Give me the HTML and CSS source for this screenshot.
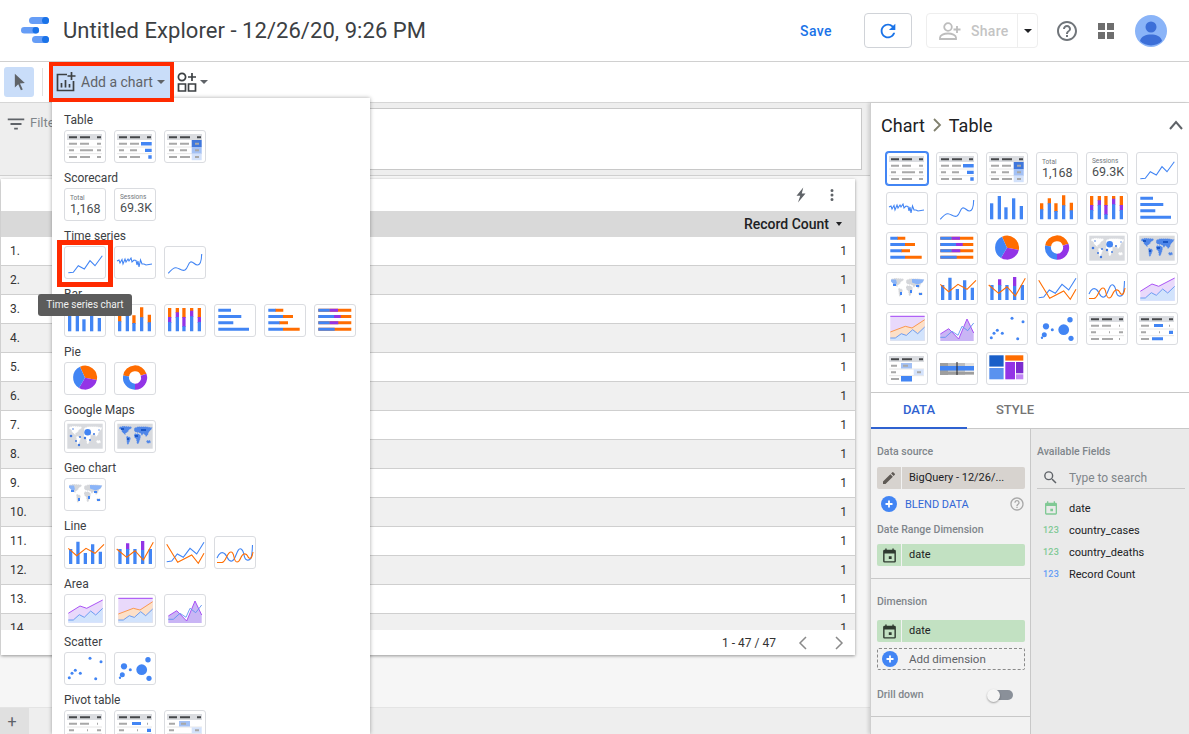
FILE: index.html
```html
<!DOCTYPE html>
<html lang="en">
<head>
  <meta charset="UTF-8">
  <title>Untitled Explorer</title>
  <link rel="stylesheet" href="styles.css">
</head>
<body>
  <!-- shared drawings for icons and chart thumbnails -->
  <svg class="sprites" aria-hidden="true">
    <defs>
      <path id="i-help" d="M11 18h2v-2h-2v2zm1-16C6.48 2 2 6.48 2 12s4.48 10 10 10 10-4.48 10-10S17.52 2 12 2zm0 18c-4.41 0-8-3.59-8-8s3.59-8 8-8 8 3.59 8 8-3.59 8-8 8zm0-14c-2.21 0-4 1.79-4 4h2c0-1.1.9-2 2-2s2 .9 2 2c0 2-3 1.75-3 5h2c0-2.25 3-2.5 3-5 0-2.21-1.79-4-4-4z"/>
      <path id="i-cal" d="M19 4h-1V2h-2v2H8V2H6v2H5a2 2 0 0 0-2 2v14a2 2 0 0 0 2 2h14a2 2 0 0 0 2-2V6a2 2 0 0 0-2-2zm0 16H5V9h14v11zM11 13h4v4h-4z"/>

      <g id="tb-head">
        <rect class="f-band" x="3" y="4" width="35" height="6"/>
        <path class="s-dark" d="M5 7.3h8M16 7.3h10M33 7.3h4"/>
        <path class="s-sep" d="M3 17h35M3 23.7h35"/>
      </g>
      <g id="t-table">
        <use href="#tb-head"/>
        <path class="s-gray" d="M5 13.7h8M16 13.7h9M33 13.7h4M5 20.3h5M16 20.3h13M33 20.3h4M5 27h8M16 27h10M33 27h4"/>
      </g>
      <g id="t-table-bars">
        <use href="#tb-head"/>
        <path class="s-gray" d="M5 13.7h8M16 13.7h9M5 20.3h5M16 20.3h7M5 27h8M16 27h10"/>
        <path class="f-blue" d="M27 12h10.7v3.4H27zM31 18.7h6.7v3.4H31zM34.3 25.3h3.4v3.4h-3.4z"/>
      </g>
      <g id="t-table-heat">
        <use href="#tb-head"/>
        <rect x="27.7" y="10" width="10" height="7" fill="#3f77dc"/>
        <rect x="27.7" y="17" width="10" height="6.7" fill="#a3c1f5"/>
        <rect x="27.7" y="23.7" width="10" height="6.5" fill="#d3e2fb"/>
        <path class="s-gray" d="M5 13.7h8M16 13.7h9M31 13.7h4M5 20.3h5M16 20.3h7M31 20.3h4M5 27h8M16 27h10M31 27h4"/>
      </g>
      <g id="t-score-total">
        <text class="sc-label" x="6" y="12">Total</text>
        <text class="sc-value" x="6" y="25.3">1,168</text>
      </g>
      <g id="t-score-sessions">
        <text class="sc-label" x="6" y="10.7">Sessions</text>
        <text class="sc-value" x="6" y="24">69.3K</text>
      </g>
      <polyline id="t-ts" class="s-blue" points="4.3,26.7 9.3,26.3 14.3,19.7 20.3,23 26,14.7 31,19.7 38.3,9.7"/>
      <polyline id="t-ts-noisy" class="s-blue" points="3,15 5,14 6,17 8,13.5 9,18 11,13 12,16 14,13 15,15 17,12 18,16 20,14 22,14.5 23,19 24,15 25,21 26.5,14 28,18 30,18 32,19 35,18.5 38,18"/>
      <path id="t-ts-smooth" class="s-blue" d="M4.3 27.3C7 24 9 21.5 12 21.7s6 4 9 2.3 3-7 5.5-8 4 3 7 3 4-4 4.2-11"/>
      <g id="t-bar" class="f-blue">
        <rect x="4" y="11.3" width="3.3" height="16"/>
        <rect x="11.7" y="4" width="3.3" height="23.3"/>
        <rect x="18.3" y="15.3" width="3.3" height="12"/>
        <rect x="26" y="6.3" width="3.3" height="21"/>
        <rect x="33.7" y="14" width="3.3" height="13.3"/>
      </g>
      <g id="t-bar-stack">
        <path class="f-orange" d="M4 11.3h3.3v7H4zM11.7 6.3H15v6h-3.3zM18.3 11.3h3.3V20h-3.3zM26 3.3h3.3v11H26zM33.7 10.7H37v8.6h-3.3z"/>
        <path class="f-blue" d="M4 17.3h3.3v10H4zM11.7 11.3H15v16h-3.3zM18.3 19h3.3v8.3h-3.3zM26 13.3h3.3v14H26zM33.7 18.3H37v9h-3.3z"/>
      </g>
      <g id="t-bar-full">
        <path class="f-orange" d="M4 4h3.3v10H4zM11.7 4H15v5h-3.3zM18.3 4h3.3v10h-3.3zM26 4h3.3v3h-3.3zM33.7 4H37v10h-3.3z"/>
        <path class="f-purple" d="M4 13h3.3v6H4zM11.7 8.3H15V14h-3.3zM18.3 13h3.3v10h-3.3zM26 6.7h3.3V13H26zM33.7 13H37v6h-3.3z"/>
        <path class="f-blue" d="M4 18h3.3v9.3H4zM11.7 13H15v14.3h-3.3zM18.3 22.3h3.3v5h-3.3zM26 12.3h3.3v15H26zM33.7 18H37v9.3h-3.3z"/>
      </g>
      <path id="t-hbar" class="f-blue" d="M4.3 4.7H17v3H4.3zM4.3 11h23v3h-23zM4.3 17.3h15v3h-15zM4.3 23.7H35v3H4.3z"/>
      <g id="t-hbar-stack">
        <path class="f-orange" d="M11 4.7h8.3v3H11zM19 11h10v3H19zM15 17.3h9v3h-9zM19 23.7h16.7v3H19z"/>
        <path class="f-blue" d="M4.3 4.7h7.3v3H4.3zM4.3 11H19v3H4.3zM4.3 17.3h11.3v3H4.3zM4.3 23.7H19v3H4.3z"/>
      </g>
      <g id="t-hbar-full">
        <path class="f-orange" d="M4.3 4.7h33v3h-33zM4.3 11h33v3h-33zM4.3 17.3h33v3h-33zM4.3 23.7h33v3h-33z"/>
        <path class="f-purple" d="M15.7 4.7H24v3h-8.3zM20 11h6.7v3H20zM15.7 17.3h8.6v3h-8.6z"/>
        <path class="f-blue" d="M4.3 4.7h11.4v3H4.3zM4.3 11H20v3H4.3zM4.3 17.3h11.4v3H4.3zM4.3 23.7h16.4v3H4.3z"/>
      </g>
      <g id="t-pie">
        <path class="f-orange" d="M21 15.7 16 4.8A12 12 0 0 1 32.8 18z"/>
        <path class="f-purple" d="M21 15.7 32.8 18A12 12 0 0 1 15 26z"/>
        <path class="f-blue" d="M21 15.7 15 26A12 12 0 0 1 16 4.8z"/>
      </g>
      <g id="t-donut" fill="none" stroke-width="6">
        <path stroke="#ff6d01" d="M12.1 14A9 9 0 0 1 29.6 12.7"/>
        <path stroke="#9334e6" d="M29.6 12.7A9 9 0 0 1 21 24.7"/>
        <path stroke="#4285f4" d="M21 24.7A9 9 0 0 1 12.1 14"/>
      </g>
      <path id="land" d="M5 7 9 6l8 .5 1 1.5-3 2-1 2-2 1-.5 2-1.5-1-2-2-1-2.5-2-.5zM12 16l3 .5 2 1.5-1.5 4-1.5 3-1-1-.5-4zM20 8l4-1.5h8l6.5 1-1.500 2.500-2 2-1 3-2 2-1.500-2.500-1.500-.5-1 2-2-3-4-.5-2-1.500zM20 13.500h5l2 2.500-1 4-1.500 4H23l-1-5-2-2zM32 20.500l4-.5 1 3-4 .5z"/>
      <g id="t-map-bubble">
        <rect class="f-map" x="3.3" y="3.7" width="35.4" height="25"/>
        <use href="#land" class="land-speckle" fill="#fff"/>
        <circle class="f-blue" cx="23.7" cy="12.3" r="3.3"/>
        <g fill="#3f78e0"><circle cx="7" cy="16" r="1.3"/><circle cx="9" cy="9" r="0.8"/><circle cx="12" cy="21" r="1"/><circle cx="15" cy="25" r="1.2"/><circle cx="16" cy="17" r="1"/><circle cx="21" cy="18" r="1.2"/><circle cx="26" cy="20" r="0.9"/><circle cx="30" cy="14" r="1"/><circle cx="35" cy="10" r="0.7"/></g>
      </g>
      <g id="t-map-filled">
        <rect class="f-map" x="3.3" y="3.7" width="35.4" height="25"/>
        <use href="#land" class="land-speckle" fill="#4f86e8"/>
        <path fill="#1a56c4" d="M7 8h3v2H7zM27 9h5v2h-5zM21 15h3v2h-3zM13 18h2v2h-2z"/>
      </g>
      <g id="t-geo">
        <use href="#land" class="land-speckle-white" fill="#d4d6da"/>
        <path fill="#8ab4f8" d="M5 7.5h5l1 4-3 1-3-3zM26 7l12 .5-1.5 3-5 2-5.500-2z"/>
        <path class="f-blue" d="M7 12h3v2H7zM14 20h2v3h-2zM24 18h2v3h-2zM33 21h3v2h-3zM30 13h3v2h-3z"/>
      </g>
      <polyline id="ln-combo" class="s-orange" points="4.3,12.3 12.7,19.7 22,12.3 31,17.3 40,8.3"/>
      <g id="t-combo">
        <path class="f-blue" d="M5 13h3.3v15H5zM12.3 5.7h3.3V28h-3.3zM19.7 17H23v11h-3.3zM27 8.3h3.3V28H27zM34.7 15.7H38V28h-3.3z"/>
        <use href="#ln-combo"/>
      </g>
      <g id="t-combo-stack">
        <path class="f-purple" d="M12 7.3h3.3V14H12zM27 5h3.3v9H27z"/>
        <path class="f-blue" d="M4.3 13h3.3v15H4.3zM12 13h3.3v15H12zM19.3 13h3.3v15h-3.3zM27 14h3.3v14H27zM34.7 13H38v15h-3.3z"/>
        <polyline class="s-orange" points="2.7,13 12.7,21.3 21,14.7 29.3,24 39.3,6.3"/>
      </g>
      <g id="t-line-two">
        <polyline class="s-blue" points="2.7,25.7 7.7,25 13.3,18 19.3,21.3 26,12.3 32.7,18 40,6.3"/>
        <polyline class="s-orange" points="2.7,8.3 13.7,26.3 27.7,19 34.3,27.3 40,17.3"/>
      </g>
      <g id="t-line-smooth">
        <path class="s-blue" d="M3 22C5 17 8 15 11 18s3 8 7 7 5-14 9-12 2 10 6 11 5-2 5.5-15"/>
        <path class="s-orange" d="M3 26.5h5C12 26 13 16 17 16s2 10 6 10 3-7 7-8 3 3 5 4 3 0 4-6"/>
      </g>
      <g id="t-area">
        <path fill="#e9d9fb" d="M4.3 19.3 16 12l6.7 2.3 16-8.3v22.7H4.3z"/>
        <path fill="#d2e3fc" d="M4.3 26h5l6-5.3 5 2.6 6.400-6.300 5 4 7-6.700v14.400H4.300z"/>
        <polyline fill="none" stroke="#a142f4" stroke-width="0.9" points="4.3,19.3 16,12 22.7,14.3 38.7,6"/>
        <polyline class="s-thin" points="4.3,26 9.3,26 15.3,20.7 20.3,23.3 26.7,17 31.7,21 38.7,14.3"/>
      </g>
      <g id="t-area-full">
        <rect x="4.3" y="4.3" width="34.4" height="24.4" fill="#e9d9fb"/>
        <path fill="#fde0c8" d="M4.3 20l15-5.700 6.700 1.700 12.700-8.300v21H4.300z"/>
        <path fill="#d2e3fc" d="M4.3 26h5l6-4.300 5 1.700 6.400-5.700 5 4 7-6.700v13.700H4.300z"/>
        <path fill="none" stroke="#a142f4" d="M4.3 4.3h34.4"/>
        <polyline fill="none" stroke="#fa903e" stroke-width="0.9" points="4.3,20 19.3,14.3 26,16 38.7,7.7"/>
        <polyline class="s-thin" points="4.3,26 9.3,26 15.3,21.7 20.3,23.4 26.7,17.7 31.7,21.7 38.7,15"/>
      </g>
      <g id="t-area-over">
        <path fill="#c9b5f5" d="M4.3 22l8.400-5.300 10 10.300L31 7l6.700 14v8H4.300z"/>
        <polyline fill="none" stroke="#a142f4" stroke-width="0.9" points="4.3,22 12.7,16.7 22.7,27 31,7 37.7,21"/>
        <polyline class="s-thin" points="4.3,25.3 9.3,25.3 16,19.3 22,23.3 26,14.3 31.7,18.7 37.7,11"/>
      </g>
      <g id="t-scatter" class="f-blue">
        <circle cx="26" cy="6.3" r="1.5"/><circle cx="37" cy="9.7" r="1.5"/><circle cx="11.3" cy="18.3" r="1.5"/>
        <circle cx="8" cy="21.3" r="1.5"/><circle cx="16.3" cy="21.3" r="1.5"/><circle cx="5.3" cy="25.7" r="1.5"/><circle cx="31.7" cy="26.7" r="1.5"/>
      </g>
      <g id="t-bubble" class="f-blue">
        <circle cx="10" cy="14.3" r="3.1"/><circle cx="34" cy="7.7" r="2.7"/><circle cx="16.3" cy="17.7" r="1.5"/>
        <circle cx="27.7" cy="17.7" r="5.4"/><circle cx="8.3" cy="22.7" r="2.5"/><circle cx="6" cy="25.7" r="1.2"/><circle cx="35" cy="26.3" r="2.6"/>
      </g>
      <g id="t-pivot">
        <use href="#tb-head"/>
        <path class="s-gray" d="M5 13.7h8M16 13.7h9M33 13.7h1M5 20.3h5M23 20.3h1M33 20.3h4M5 27h8M16 27h11M33 27h1"/>
      </g>
      <g id="t-pivot-bars">
        <use href="#tb-head"/>
        <path class="s-gray" d="M5 13.7h8M5 20.3h5M33 13.7h1M23 20.3h1M5 27h8"/>
        <path class="f-blue" d="M18 12h9v3h-9zM33 18.7h4v3.400h-4zM16 25.300h11v3H16z"/>
      </g>
      <g id="t-pivot-heat">
        <use href="#tb-head"/>
        <rect x="15" y="11" width="11" height="5.5" fill="#a3c1f5"/>
        <rect x="27.7" y="17.3" width="10" height="6" fill="#d3e2fb"/>
        <rect x="15" y="24" width="11" height="5.5" fill="#4285f4"/>
        <path class="s-gray" d="M5 13.7h6M17 13.7h5M5 20.3h5M31 20.3h4M5 27h8"/>
      </g>
      <g id="t-bullet">
        <rect x="4" y="11" width="34" height="12" fill="#e3e3e3"/>
        <rect x="4" y="11" width="8" height="12" fill="#9e9e9e"/>
        <rect x="12" y="11" width="17" height="12" fill="#bdbdbd"/>
        <rect x="4" y="14" width="34" height="4.5" fill="#4285f4"/>
        <rect x="4" y="20" width="34" height="2.5" fill="#9e9e9e"/>
        <path stroke="#202124" d="M21 10v13"/>
      </g>
      <g id="t-tree">
        <rect x="3.3" y="3.3" width="14.3" height="11.3" fill="#1a5fc8"/>
        <rect x="3.3" y="16" width="14.3" height="11.3" fill="#5a92ef"/>
        <rect x="19.3" y="3.3" width="18" height="5.3" fill="#ff6d01"/>
        <rect x="19.3" y="10" width="9.7" height="17.3" fill="#9334e6"/>
        <rect x="30" y="10" width="7.3" height="11.3" fill="#7c2bcf"/>
        <rect x="30" y="22.3" width="7.3" height="5" fill="#c084f5"/>
      </g>
    </defs>
  </svg>

  <header class="topbar">
    <svg class="logo" viewBox="0 0 30 28">
      <rect x="8" y="0" width="20" height="7" rx="3.5" fill="#669df6"/>
      <rect x="0" y="10" width="18" height="6.5" rx="3.25" fill="#669df6"/>
      <rect x="11" y="19" width="17" height="7" rx="3.5" fill="#669df6"/>
      <circle cx="24.5" cy="3.5" r="3.5" fill="#1a73e8"/>
      <circle cx="14.8" cy="13.25" r="3.25" fill="#1a73e8"/>
      <circle cx="24.5" cy="22.5" r="3.5" fill="#1a73e8"/>
    </svg>
    <h1 class="title">Untitled Explorer - 12/26/20, 9:26 PM</h1>
    <a class="save">Save</a>
    <button class="refresh">
      <svg viewBox="0 0 24 24" width="22" height="22"><path fill="#1a73e8" d="M17.65 6.35A7.958 7.958 0 0 0 12 4c-4.42 0-7.99 3.58-7.99 8s3.57 8 7.99 8c3.73 0 6.84-2.55 7.73-6h-2.08A5.99 5.99 0 0 1 12 18c-3.31 0-6-2.69-6-6s2.69-6 6-6c1.66 0 3.14.69 4.22 1.78L13 11h7V4l-2.35 2.35z"/></svg>
    </button>
    <div class="share">
      <div class="share-main">
        <svg viewBox="0 0 24 20" width="24" height="20" fill="none" stroke="#bdbdbd" stroke-width="1.8">
          <circle cx="10" cy="6" r="3.8"/>
          <path d="M2 18v-1.5c0-2.5 4-4 8-4s8 1.5 8 4V18zM19 5v7M15.5 8.5h7"/>
        </svg>
        <span>Share</span>
      </div>
      <div class="share-more"><i class="caret caret-dark"></i></div>
    </div>
    <svg class="help-top" viewBox="0 0 24 24"><use href="#i-help"/></svg>
    <div class="apps"><i></i><i></i><i></i><i></i></div>
    <svg class="avatar" viewBox="0 0 32 32">
      <circle cx="16" cy="16" r="16" fill="#8ab4f8"/>
      <circle cx="16" cy="12" r="5.5" fill="#3c6fd8"/>
      <path fill="#3c6fd8" d="M5 26c1-5 6-6.5 11-6.5S26 21 27 26a16 16 0 0 1-22 0z"/>
    </svg>
  </header>

  <div class="toolbar">
    <button class="tool-select">
      <svg viewBox="0 0 24 24" width="20" height="20"><path fill="#5f6368" d="M7 2l12 11.2-5.8.5 3.3 7.3-2.2 1-3.2-7.4L7 18.5V2z"/></svg>
    </button>
    <div class="tool-sep"></div>
    <button class="add-chart">
      <svg viewBox="0 0 20 20" width="20" height="20" fill="none" stroke="#3c4043" stroke-width="1.7">
        <path d="M11 2.5H1.5v16h16V9M5.500 11v4.500M9.500 8v7.500M13.500 12v3.500M15.500 0v8M11.500 4h8"/>
      </svg>
      <span>Add a chart</span>
      <i class="caret"></i>
    </button>
    <button class="add-control">
      <svg viewBox="0 0 20 20" width="20" height="20" fill="none" stroke="#3c4043" stroke-width="1.7">
        <circle cx="5" cy="5" r="3.6"/>
        <path d="M15 1v8M11 5h8M1.5 12h7v7h-7zM11.5 12h7v7h-7z"/>
      </svg>
      <i class="caret"></i>
    </button>
  </div>

  <main class="workspace">
    <section class="canvas">
      <div class="filter-bar">
        <div class="filter-label">
          <svg viewBox="0 0 24 24" width="22" height="22"><path fill="#5f6368" d="M10 18h4v-2h-4v2zM3 6v2h18V6H3zm3 7h12v-2H6v2z"/></svg>
          <span>Filter</span>
        </div>
        <div class="filter-box"></div>
      </div>

      <div class="table-card">
        <div class="card-tools">
          <svg viewBox="0 0 24 24" width="18" height="18"><path fill="#5f6368" d="M15 2 6 13h5l-3 9 10-12h-5z"/></svg>
          <svg viewBox="0 0 24 24" width="18" height="18"><path fill="#5f6368" d="M12 8a2 2 0 1 0 0-4 2 2 0 0 0 0 4zm0 2a2 2 0 1 0 0 4 2 2 0 0 0 0-4zm0 6a2 2 0 1 0 0 4 2 2 0 0 0 0-4z"/></svg>
        </div>
        <div class="table-head">Record Count <i class="caret caret-dark"></i></div>
        <div class="table-body">
          <div class="row"><span>1.</span><span>1</span></div>
          <div class="row"><span>2.</span><span>1</span></div>
          <div class="row"><span>3.</span><span>1</span></div>
          <div class="row"><span>4.</span><span>1</span></div>
          <div class="row"><span>5.</span><span>1</span></div>
          <div class="row"><span>6.</span><span>1</span></div>
          <div class="row"><span>7.</span><span>1</span></div>
          <div class="row"><span>8.</span><span>1</span></div>
          <div class="row"><span>9.</span><span>1</span></div>
          <div class="row"><span>10.</span><span>1</span></div>
          <div class="row"><span>11.</span><span>1</span></div>
          <div class="row"><span>12.</span><span>1</span></div>
          <div class="row"><span>13.</span><span>1</span></div>
          <div class="row"><span>14.</span><span>1</span></div>
        </div>
        <div class="table-foot">
          <span>1 - 47 / 47</span>
          <svg viewBox="0 0 10 14" width="10" height="14"><path d="M8 1 2 7l6 6"/></svg>
          <svg viewBox="0 0 10 14" width="10" height="14"><path d="M2 1l6 6-6 6"/></svg>
        </div>
      </div>

      <div class="page-tabs"><button class="page-add">+</button></div>
    </section>

    <aside class="panel">
      <div class="gallery">
        <div class="panel-head">
          <span>Chart</span>
          <svg viewBox="0 0 10 14" width="10" height="14" fill="none" stroke="#80806e" stroke-width="1.8"><path d="M2 1l6 6-6 6"/></svg>
          <span>Table</span>
          <svg class="collapse" viewBox="0 0 16 10" width="16" height="10" fill="none" stroke="#5f6368" stroke-width="2"><path d="M2 9l6-7 6 7"/></svg>
        </div>
        <div class="thumb-grid">
          <svg class="thumb selected" viewBox="1 1 40 31"><use href="#t-table"/></svg>
          <svg class="thumb" viewBox="1 1 40 31"><use href="#t-table-bars"/></svg>
          <svg class="thumb" viewBox="1 1 40 31"><use href="#t-table-heat"/></svg>
          <svg class="thumb" viewBox="1 1 40 31"><use href="#t-score-total"/></svg>
          <svg class="thumb" viewBox="1 1 40 31"><use href="#t-score-sessions"/></svg>
          <svg class="thumb" viewBox="1 1 40 31"><use href="#t-ts"/></svg>
          <svg class="thumb" viewBox="1 1 40 31"><use href="#t-ts-noisy"/></svg>
          <svg class="thumb" viewBox="1 1 40 31"><use href="#t-ts-smooth"/></svg>
          <svg class="thumb" viewBox="1 1 40 31"><use href="#t-bar"/></svg>
          <svg class="thumb" viewBox="1 1 40 31"><use href="#t-bar-stack"/></svg>
          <svg class="thumb" viewBox="1 1 40 31"><use href="#t-bar-full"/></svg>
          <svg class="thumb" viewBox="1 1 40 31"><use href="#t-hbar"/></svg>
          <svg class="thumb" viewBox="1 1 40 31"><use href="#t-hbar-stack"/></svg>
          <svg class="thumb" viewBox="1 1 40 31"><use href="#t-hbar-full"/></svg>
          <svg class="thumb" viewBox="1 1 40 31"><use href="#t-pie"/></svg>
          <svg class="thumb" viewBox="1 1 40 31"><use href="#t-donut"/></svg>
          <svg class="thumb" viewBox="1 1 40 31"><use href="#t-map-bubble"/></svg>
          <svg class="thumb" viewBox="1 1 40 31"><use href="#t-map-filled"/></svg>
          <svg class="thumb" viewBox="1 1 40 31"><use href="#t-geo"/></svg>
          <svg class="thumb" viewBox="1 1 40 31"><use href="#t-combo"/></svg>
          <svg class="thumb" viewBox="1 1 40 31"><use href="#t-combo-stack"/></svg>
          <svg class="thumb" viewBox="1 1 40 31"><use href="#t-line-two"/></svg>
          <svg class="thumb" viewBox="1 1 40 31"><use href="#t-line-smooth"/></svg>
          <svg class="thumb" viewBox="1 1 40 31"><use href="#t-area"/></svg>
          <svg class="thumb" viewBox="1 1 40 31"><use href="#t-area-full"/></svg>
          <svg class="thumb" viewBox="1 1 40 31"><use href="#t-area-over"/></svg>
          <svg class="thumb" viewBox="1 1 40 31"><use href="#t-scatter"/></svg>
          <svg class="thumb" viewBox="1 1 40 31"><use href="#t-bubble"/></svg>
          <svg class="thumb" viewBox="1 1 40 31"><use href="#t-pivot"/></svg>
          <svg class="thumb" viewBox="1 1 40 31"><use href="#t-pivot-bars"/></svg>
          <svg class="thumb" viewBox="1 1 40 31"><use href="#t-pivot-heat"/></svg>
          <svg class="thumb" viewBox="1 1 40 31"><use href="#t-bullet"/></svg>
          <svg class="thumb" viewBox="1 1 40 31"><use href="#t-tree"/></svg>
        </div>
      </div>

      <div class="tabs">
        <div class="tab active">DATA</div>
        <div class="tab">STYLE</div>
      </div>

      <div class="props">
        <div class="props-left">
          <div class="prop-group">
            <div class="prop-label">Data source</div>
            <div class="chip chip-source">
              <span class="chip-icon"><svg viewBox="0 0 24 24" width="16" height="16"><path fill="#5f5a55" d="M3 17.25V21h3.75L17.81 9.94l-3.75-3.75L3 17.25zM20.71 7.04a1 1 0 0 0 0-1.41l-2.34-2.34a1 1 0 0 0-1.41 0l-1.83 1.83 3.75 3.75 1.83-1.83z"/></svg></span>
              <span class="chip-text">BigQuery - 12/26/...</span>
            </div>
            <div class="blend">
              <svg class="plus-dot" viewBox="0 0 16 16"><circle cx="8" cy="8" r="8"/><path d="M8 4.5v7M4.5 8h7"/></svg>
              <span>BLEND DATA</span>
              <svg class="blend-help" viewBox="0 0 24 24"><use href="#i-help"/></svg>
            </div>
            <div class="prop-label prop-label-range">Date Range Dimension</div>
            <div class="chip chip-date">
              <span class="chip-icon"><svg viewBox="0 0 24 24" width="17" height="17"><use href="#i-cal"/></svg></span>
              <span class="chip-text">date</span>
            </div>
          </div>
          <div class="prop-group prop-group-dim">
            <div class="prop-label">Dimension</div>
            <div class="chip chip-date">
              <span class="chip-icon"><svg viewBox="0 0 24 24" width="17" height="17"><use href="#i-cal"/></svg></span>
              <span class="chip-text">date</span>
            </div>
            <div class="add-dim">
              <svg class="plus-dot" viewBox="0 0 16 16"><circle cx="8" cy="8" r="8"/><path d="M8 4.5v7M4.5 8h7"/></svg>
              <span>Add dimension</span>
            </div>
            <div class="drill">
              <span class="prop-label">Drill down</span>
              <span class="switch"><i></i></span>
            </div>
          </div>
        </div>
        <div class="props-right">
          <div class="prop-label">Available Fields</div>
          <div class="field-search">
            <svg viewBox="0 0 24 24" width="17" height="17"><path fill="#5f6368" d="M15.5 14h-.79l-.28-.27A6.47 6.47 0 0 0 16 9.5 6.5 6.5 0 1 0 9.5 16c1.61 0 3.09-.59 4.23-1.57l.27.28v.79l5 4.99L20.49 19l-4.99-5zm-6 0a4.5 4.5 0 1 1 0-9 4.5 4.5 0 0 1 0 9z"/></svg>
            <span>Type to search</span>
          </div>
          <div class="field"><span class="field-icon"><svg viewBox="0 0 24 24" width="16" height="16"><use href="#i-cal"/></svg></span><span>date</span></div>
          <div class="field"><span class="field-icon num-green">123</span><span>country_cases</span></div>
          <div class="field"><span class="field-icon num-green">123</span><span>country_deaths</span></div>
          <div class="field"><span class="field-icon num-blue">123</span><span>Record Count</span></div>
        </div>
      </div>
    </aside>
  </main>

  <!-- open "Add a chart" dropdown -->
  <div class="chart-menu">
    <div class="menu-group">
      <div class="menu-label">Table</div>
      <div class="menu-thumbs">
        <svg class="thumb" viewBox="1 1 40 31"><use href="#t-table"/></svg>
        <svg class="thumb" viewBox="1 1 40 31"><use href="#t-table-bars"/></svg>
        <svg class="thumb" viewBox="1 1 40 31"><use href="#t-table-heat"/></svg>
      </div>
    </div>
    <div class="menu-group">
      <div class="menu-label">Scorecard</div>
      <div class="menu-thumbs">
        <svg class="thumb" viewBox="1 1 40 31"><use href="#t-score-total"/></svg>
        <svg class="thumb" viewBox="1 1 40 31"><use href="#t-score-sessions"/></svg>
      </div>
    </div>
    <div class="menu-group">
      <div class="menu-label">Time series</div>
      <div class="menu-thumbs">
        <span class="thumb-hot">
          <svg class="thumb" viewBox="1 1 40 31"><use href="#t-ts"/></svg>
          <span class="hot-box"></span>
          <span class="tooltip">Time series chart</span>
        </span>
        <svg class="thumb" viewBox="1 1 40 31"><use href="#t-ts-noisy"/></svg>
        <svg class="thumb" viewBox="1 1 40 31"><use href="#t-ts-smooth"/></svg>
      </div>
    </div>
    <div class="menu-group">
      <div class="menu-label">Bar</div>
      <div class="menu-thumbs">
        <svg class="thumb" viewBox="1 1 40 31"><use href="#t-bar"/></svg>
        <svg class="thumb" viewBox="1 1 40 31"><use href="#t-bar-stack"/></svg>
        <svg class="thumb" viewBox="1 1 40 31"><use href="#t-bar-full"/></svg>
        <svg class="thumb" viewBox="1 1 40 31"><use href="#t-hbar"/></svg>
        <svg class="thumb" viewBox="1 1 40 31"><use href="#t-hbar-stack"/></svg>
        <svg class="thumb" viewBox="1 1 40 31"><use href="#t-hbar-full"/></svg>
      </div>
    </div>
    <div class="menu-group">
      <div class="menu-label">Pie</div>
      <div class="menu-thumbs">
        <svg class="thumb" viewBox="1 1 40 31"><use href="#t-pie"/></svg>
        <svg class="thumb" viewBox="1 1 40 31"><use href="#t-donut"/></svg>
      </div>
    </div>
    <div class="menu-group">
      <div class="menu-label">Google Maps</div>
      <div class="menu-thumbs">
        <svg class="thumb" viewBox="1 1 40 31"><use href="#t-map-bubble"/></svg>
        <svg class="thumb" viewBox="1 1 40 31"><use href="#t-map-filled"/></svg>
      </div>
    </div>
    <div class="menu-group">
      <div class="menu-label">Geo chart</div>
      <div class="menu-thumbs">
        <svg class="thumb" viewBox="1 1 40 31"><use href="#t-geo"/></svg>
      </div>
    </div>
    <div class="menu-group">
      <div class="menu-label">Line</div>
      <div class="menu-thumbs">
        <svg class="thumb" viewBox="1 1 40 31"><use href="#t-combo"/></svg>
        <svg class="thumb" viewBox="1 1 40 31"><use href="#t-combo-stack"/></svg>
        <svg class="thumb" viewBox="1 1 40 31"><use href="#t-line-two"/></svg>
        <svg class="thumb" viewBox="1 1 40 31"><use href="#t-line-smooth"/></svg>
      </div>
    </div>
    <div class="menu-group">
      <div class="menu-label">Area</div>
      <div class="menu-thumbs">
        <svg class="thumb" viewBox="1 1 40 31"><use href="#t-area"/></svg>
        <svg class="thumb" viewBox="1 1 40 31"><use href="#t-area-full"/></svg>
        <svg class="thumb" viewBox="1 1 40 31"><use href="#t-area-over"/></svg>
      </div>
    </div>
    <div class="menu-group">
      <div class="menu-label">Scatter</div>
      <div class="menu-thumbs">
        <svg class="thumb" viewBox="1 1 40 31"><use href="#t-scatter"/></svg>
        <svg class="thumb" viewBox="1 1 40 31"><use href="#t-bubble"/></svg>
      </div>
    </div>
    <div class="menu-group">
      <div class="menu-label">Pivot table</div>
      <div class="menu-thumbs">
        <svg class="thumb" viewBox="1 1 40 31"><use href="#t-pivot"/></svg>
        <svg class="thumb" viewBox="1 1 40 31"><use href="#t-pivot-bars"/></svg>
        <svg class="thumb" viewBox="1 1 40 31"><use href="#t-pivot-heat"/></svg>
      </div>
    </div>
  </div>
</body>
</html>
```

FILE: styles.css
```css
* {
  box-sizing: border-box;
  margin: 0;
  padding: 0;
}

body {
  position: relative;
  width: 1189px;
  height: 734px;
  overflow: hidden;
  background: #fff;
  color: #3c4043;
  font-family: Roboto, "Liberation Sans", sans-serif;
  display: flex;
  flex-direction: column;
}

button {
  border: none;
  background: none;
  font-family: inherit;
}

.sprites {
  position: absolute;
  width: 0;
  height: 0;
}

/* thumbnail drawing colours */
.f-blue { fill: #4285f4; }
.f-orange { fill: #ff6d01; }
.f-purple { fill: #9334e6; }
.f-band { fill: #dadce0; }
.f-map { fill: #d8dade; }
.s-dark { fill: none; stroke: #45474a; stroke-width: 2; }
.s-gray { fill: none; stroke: #a8a8a8; stroke-width: 2; }
.s-sep { fill: none; stroke: #e6e6e6; stroke-width: 1; }
.s-blue { fill: none; stroke: #4285f4; stroke-width: 1.1; }
.s-thin { fill: none; stroke: #5f94f0; stroke-width: 0.9; }
.s-orange { fill: none; stroke: #ff6d01; stroke-width: 1.1; }
.sc-label { font-size: 6.5px; fill: #70757a; }
.sc-value { font-size: 12.5px; fill: #4a4d50; }
.land-speckle { stroke: #d8dade; stroke-width: 0.8; stroke-dasharray: 1 1; }
.land-speckle-white { stroke: #fff; stroke-width: 0.8; stroke-dasharray: 1 1; }

.caret {
  display: inline-block;
  width: 0;
  height: 0;
  border-left: 4.5px solid transparent;
  border-right: 4.5px solid transparent;
  border-top: 4.5px solid #5f6368;
}

.caret-dark {
  border-left-width: 3.5px;
  border-right-width: 3.5px;
  border-top: 4px solid #202124;
}

/* top bar */
.topbar {
  height: 62px;
  flex-shrink: 0;
  display: flex;
  align-items: center;
  border-bottom: 1px solid #d0d0d0;
  padding: 0 22px 0 21px;
}

.logo {
  width: 30px;
  height: 28px;
  margin-right: 12px;
}

.title {
  font-size: 22px;
  font-weight: 400;
  letter-spacing: 0.05px;
  color: #3c4043;
  flex: 1;
}

.save {
  font-size: 14px;
  font-weight: 500;
  color: #1a73e8;
  letter-spacing: 0.4px;
  margin-right: 32px;
}

.refresh {
  width: 48px;
  height: 35px;
  border: 1px solid #d0d3d8;
  border-radius: 4px;
  display: flex;
  align-items: center;
  justify-content: center;
  margin-right: 14px;
}

.share {
  width: 112px;
  height: 35px;
  border: 1px solid #eeeeee;
  border-radius: 4px;
  display: flex;
  margin-right: 17px;
}

.share-main {
  width: 91px;
  display: flex;
  align-items: center;
  gap: 9px;
  padding-left: 11px;
  border-right: 1px solid #eeeeee;
  font-size: 14px;
  font-weight: 500;
  color: #c4c4c4;
  letter-spacing: 0.3px;
}

.share-more {
  flex: 1;
  display: flex;
  align-items: center;
  justify-content: center;
}

.share-more .caret-dark {
  border-left-width: 4px;
  border-right-width: 4px;
}

.help-top {
  width: 24px;
  height: 24px;
  fill: #70757a;
  margin-right: 19px;
}

.apps {
  width: 16px;
  height: 16px;
  display: grid;
  grid-template-columns: 7px 7px;
  grid-template-rows: 7px 7px;
  gap: 2px;
  margin-right: 21px;
}

.apps i {
  background: #6e6e6e;
}

.avatar {
  width: 32px;
  height: 32px;
}

/* tool row */
.toolbar {
  height: 41px;
  flex-shrink: 0;
  display: flex;
  align-items: center;
  padding-left: 4px;
  padding-bottom: 1px;
  border-bottom: 1px solid #d6d6d6;
}

.tool-select {
  width: 30px;
  height: 30px;
  background: #c9ddf9;
  border-radius: 3px;
  display: flex;
  align-items: center;
  justify-content: center;
}

.tool-sep {
  width: 1px;
  height: 28px;
  background: #e0e0e0;
  margin: 0 10px 0 8px;
}

.add-chart {
  position: relative;
  z-index: 3;
  width: 117px;
  height: 32px;
  background: #c9ddf9;
  outline: 4px solid #ff2a00;
  display: flex;
  align-items: center;
  padding: 1px 0 0 3px;
  gap: 5px;
  font-size: 14px;
  color: #5f6368;
}

.add-chart .caret {
  margin-left: -1px;
}

.add-control {
  display: flex;
  align-items: center;
  gap: 3px;
  margin-left: 7px;
}

/* main area */
.workspace {
  flex: 1;
  min-height: 0;
  display: flex;
}

.canvas {
  width: 870px;
  display: flex;
  flex-direction: column;
  background: #f6f6f6;
}

.filter-bar {
  height: 73px;
  flex-shrink: 0;
  display: flex;
  background: #eeeeee;
  border-bottom: 1px solid #cfcfcf;
  padding: 5px 8px 5px 0;
}

.filter-label {
  width: 100px;
  display: flex;
  align-items: flex-start;
  gap: 3px;
  padding: 5px 0 0 5px;
  font-size: 13px;
  color: #80868b;
}

.filter-label span {
  line-height: 20px;
}

.filter-box {
  flex: 1;
  background: #fff;
  border: 1px solid #c8c8c8;
}

.table-card {
  width: 854px;
  height: 476px;
  margin: 3px 0 0 1px;
  flex-shrink: 0;
  display: flex;
  flex-direction: column;
  background: #fff;
  box-shadow: 0 1px 3px rgba(0, 0, 0, 0.4);
  font-size: 12px;
  color: #333;
}

.card-tools {
  height: 32px;
  flex-shrink: 0;
  display: flex;
  align-items: center;
  justify-content: flex-end;
  gap: 13px;
  padding-right: 14px;
}

.table-head {
  height: 26px;
  flex-shrink: 0;
  display: flex;
  align-items: center;
  justify-content: flex-end;
  gap: 7px;
  padding-right: 13px;
  background: #d9d9d9;
  font-size: 14px;
  font-weight: 500;
  color: #202124;
}

.table-body {
  flex: 1;
  min-height: 0;
  overflow: hidden;
}

.row {
  height: 29px;
  display: flex;
  align-items: center;
  justify-content: space-between;
  padding: 0 8px 0 9px;
  border-bottom: 1px solid #cfcfcf;
}

.row:nth-child(even) {
  background: #f0f0f0;
}

.table-foot {
  height: 25px;
  flex-shrink: 0;
  display: flex;
  align-items: center;
  justify-content: flex-end;
  padding-right: 11px;
  gap: 26px;
}

.table-foot path {
  fill: none;
  stroke: #8a8a8a;
  stroke-width: 1.5;
}

.table-foot span {
  margin-right: -4px;
}

.page-tabs {
  height: 27px;
  margin-top: auto;
  background: #eeeeee;
  border-top: 1px solid #e4e4e4;
}

.page-add {
  width: 29px;
  height: 26px;
  padding-right: 5px;
  background: #e0e0e0;
  font-size: 16px;
  color: #5f6368;
}

/* right panel */
.panel {
  flex: 1;
  min-width: 0;
  display: flex;
  flex-direction: column;
  border-left: 1px solid #cfcfcf;
  box-shadow: -2px 0 3px rgba(0, 0, 0, 0.12);
  z-index: 1;
  background: #fff;
}

.gallery {
  padding: 10px 0 7px 15px;
  border-bottom: 1px solid #c8c8c8;
}

.panel-head {
  height: 24px;
  display: flex;
  align-items: center;
  gap: 7px;
  margin: 0 0 15px -5px;
  font-size: 18px;
  color: #202124;
}

.collapse {
  margin-left: auto;
  margin-right: 5px;
}

.thumb-grid {
  display: grid;
  grid-template-columns: repeat(6, 42px);
  grid-auto-rows: 33px;
  gap: 7px 8px;
}

.thumb {
  display: block;
  width: 42px;
  height: 33px;
  border: 1px solid #dadce0;
  border-radius: 3px;
  background: #fff;
}

.thumb.selected {
  border-color: #4285f4;
  box-shadow: 0 0 0 1px #4285f4;
}

.tabs {
  height: 36px;
  flex-shrink: 0;
  display: flex;
  border-bottom: 1px solid #c8c8c8;
}

.tab {
  width: 96px;
  text-align: center;
  font-size: 13px;
  font-weight: 500;
  line-height: 33px;
  color: #757575;
}

.tab.active {
  color: #2f62d0;
  border-bottom: 2px solid #2f62d0;
  height: 36px;
}

.props {
  flex: 1;
  min-height: 0;
  display: flex;
}

.props-left {
  width: 160px;
  background: #f2f2f2;
  border-right: 1px solid #c8c8c8;
}

.props-right {
  flex: 1;
  background: #eaeaea;
  padding: 17px 4px 0 6px;
}

.prop-group {
  padding: 17px 5px 12px 6px;
  border-bottom: 1px solid #c8c8c8;
}

.prop-group-dim {
  padding-bottom: 13px;
}

.prop-label {
  font-size: 10.5px;
  line-height: 12px;
  font-weight: 500;
  color: #80868b;
  margin-bottom: 9px;
}

.prop-label-range {
  margin: 12px 0 8px;
}

.prop-group-dim > .prop-label {
  margin-bottom: 12px;
}

.chip {
  height: 22px;
  display: flex;
  gap: 1px;
  font-size: 11px;
  color: #202124;
}

.chip-icon {
  width: 24px;
  display: flex;
  align-items: center;
  justify-content: center;
  border-radius: 2px 0 0 2px;
}

.chip-text {
  flex: 1;
  padding-left: 7px;
  line-height: 22px;
  border-radius: 0 2px 2px 0;
}

.chip-source .chip-icon,
.chip-source .chip-text {
  background: #d7d3cf;
}

.chip-date .chip-icon,
.chip-date .chip-text {
  background: #c2e1c2;
}

.chip-date svg {
  fill: #2f3a30;
}

.plus-dot {
  width: 16px;
  height: 16px;
  flex-shrink: 0;
}

.plus-dot circle {
  fill: #4285f4;
}

.plus-dot path {
  stroke: #fff;
  stroke-width: 1.8;
}

.blend {
  height: 16px;
  display: flex;
  align-items: center;
  gap: 8px;
  margin-top: 7px;
  padding-left: 4px;
  font-size: 11px;
  color: #3367d6;
}

.blend-help {
  width: 16px;
  height: 16px;
  fill: #a8a8a8;
  margin-left: auto;
}

.add-dim {
  height: 22px;
  margin-top: 6px;
  display: flex;
  align-items: center;
  gap: 11px;
  padding-left: 4px;
  border: 1px dashed #8a8a8a;
  border-radius: 2px;
  font-size: 11.5px;
  color: #5f6368;
}

.drill {
  height: 16px;
  margin-top: 17px;
  display: flex;
  align-items: center;
  justify-content: space-between;
  padding-right: 12px;
}

.drill .prop-label {
  margin: 0;
}

.switch {
  position: relative;
  width: 20px;
  height: 10px;
  border-radius: 5px;
  background: #8a9099;
}

.switch i {
  position: absolute;
  left: -6px;
  top: -1.5px;
  width: 13px;
  height: 13px;
  border-radius: 50%;
  background: #f5f5f5;
  box-shadow: 0 1px 2px rgba(0, 0, 0, 0.35);
}

.field-search {
  height: 22px;
  display: flex;
  align-items: center;
  gap: 10px;
  padding-left: 5px;
  border-bottom: 1px solid #c8c8c8;
  font-size: 12px;
  color: #80868b;
  margin: 8px 0;
}

.field {
  height: 22px;
  display: flex;
  align-items: center;
  font-size: 11px;
  color: #202124;
}

.field-icon {
  width: 32px;
  flex-shrink: 0;
  padding-left: 6px;
  display: flex;
  align-items: center;
  font-size: 9px;
  font-weight: 500;
  letter-spacing: 0.2px;
  fill: #81c995;
}

.num-green {
  color: #81c995;
}

.num-blue {
  color: #669df6;
}

/* chart dropdown */
.chart-menu {
  position: absolute;
  z-index: 2;
  left: 52px;
  top: 98px;
  width: 318px;
  height: 636px;
  padding: 14px 0 0 12px;
  background: #fff;
  box-shadow: 0 0 4px rgba(0, 0, 0, 0.35);
}

.menu-group {
  height: 58px;
}

.menu-label {
  font-size: 12px;
  line-height: 16px;
  margin-bottom: 2px;
  color: #3c4043;
}

.menu-thumbs {
  display: flex;
  gap: 8px;
}

.thumb-hot {
  position: relative;
  display: block;
}

.hot-box {
  position: absolute;
  left: -7px;
  top: -6px;
  width: 56px;
  height: 47px;
  border: 5px solid #ff2a00;
}

.tooltip {
  position: absolute;
  z-index: 1;
  left: -26px;
  top: 48px;
  width: 94px;
  height: 22px;
  border-radius: 3px;
  background: #5c5c5c;
  color: #f1f1f1;
  font-size: 10px;
  line-height: 22px;
  text-align: center;
  white-space: nowrap;
}
```
